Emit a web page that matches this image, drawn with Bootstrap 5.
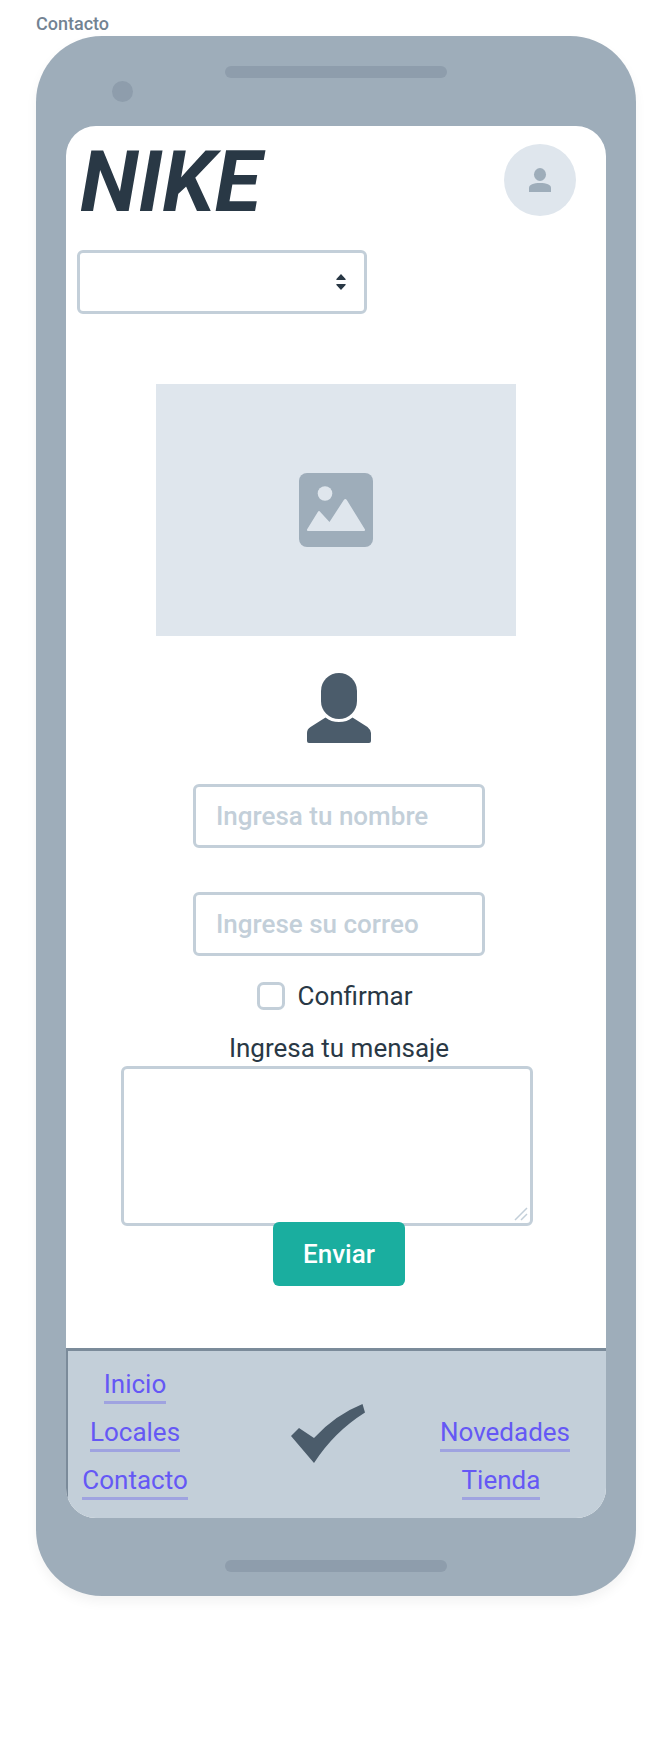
<!DOCTYPE html>
<html lang="es">
<head>
<meta charset="utf-8">
<meta name="viewport" content="width=device-width, initial-scale=1">
<title>Contacto</title>
<link href="https://cdn.jsdelivr.net/npm/bootstrap@5.3.0/dist/css/bootstrap.min.css" rel="stylesheet">
<style>
  :root { --ink: #293845; --line: #c3cfd9; --shell: #9eadba; --groove: #8e9dac; --slate: #4b5c6b; --soft: #dfe6ed; }
  body { font-family: Roboto, "Liberation Sans", sans-serif; font-size: 26px; line-height: 36px; color: var(--ink); background: #fff; }
  .stage { max-width: 672px; padding: 12px 36px 162px; }
  .frame-title { font-size: 18px; line-height: 24px; font-weight: 500; color: #738392; margin: 0; }
  .device { background: var(--shell); border-radius: 66px; padding: 30px 30px 24px; box-shadow: 0 6px 12px rgba(0, 0, 0, .05); }
  .groove { width: 222px; height: 12px; border-radius: 6px; background: var(--groove); }
  .lens { width: 21px; height: 21px; border-radius: 50%; background: var(--groove); margin: 3px 0 24px 46px; }
  .screen { background: #fff; border-radius: 30px; overflow: hidden; margin-bottom: 42px; }
  .topbar { padding: 18px 30px 0 14px; }
  .brand { font-size: 85px; line-height: 68px; padding-top: 4px; font-weight: 700; font-style: italic; margin: 0; }
  .avatar { width: 72px; height: 72px; background: var(--soft); border: 0; padding: 0; }
  .field { height: 64px; border: 3px solid var(--line); border-radius: 6px; padding: 0 20px; font-size: 26px; line-height: 36px; color: var(--ink); }
  .field::placeholder { color: var(--line); font-weight: 500; opacity: 1; }
  .picker { width: 290px; margin: 34px 0 0 11px; background: #fff url("data:image/svg+xml,%3Csvg xmlns='http://www.w3.org/2000/svg' width='10' height='16' fill='%23293845'%3E%3Cpath d='M5 0 9.6 5v1H.4V5zM5 16 9.6 11v-1H.4v1z'/%3E%3C/svg%3E") no-repeat right 18px center; background-size: 10px 16px; }
  .photo { width: 360px; height: 252px; background: var(--soft); margin-top: 70px; }
  .contact-form { padding: 37px 0 62px 6px; }
  .short { width: 292px; }
  .name-field { margin-top: 40px; }
  .mail-field { margin-top: 44px; }
  .confirm-row { margin: 22px 8px 16px 0; gap: 12px; }
  .tick { width: 28px; height: 28px; margin: 0; border: 3px solid var(--line); border-radius: 5px; }
  .message { width: 412px; height: 160px; margin-right: 24px; resize: none; background: #fff url("data:image/svg+xml,%3Csvg xmlns='http://www.w3.org/2000/svg' width='14' height='14' stroke='%23c3cfd9' stroke-width='1.5'%3E%3Cpath d='M1 13 13 1M7 13l6-6'/%3E%3C/svg%3E") no-repeat right 2px bottom 2px; background-size: 14px 14px; }
  .send { width: 132px; height: 64px; margin-top: -4px; padding: 0; border: 0; border-radius: 6px; background: #1aae9f; color: #fff; font-size: 26px; font-weight: 500; }
  .send:hover { background: #17998c; color: #fff; }
  .site-foot { background: var(--line); border-top: 3px solid #7b8b9a; border-left: 2px solid #7b8b9a; padding: 16px 34px 18px 0; }
  .links { width: 134px; gap: 11px; }
  .links a { line-height: 34px; color: #6558f5; text-decoration: none; border-bottom: 3px solid #9fa3e0; }
  svg { display: block; }
</style>
</head>
<body>
<main class="stage mx-auto">
  <p class="frame-title">Contacto</p>
  <div class="device">
    <div class="groove mx-auto"></div>
    <div class="lens"></div>
    <div class="screen">
      <header class="topbar d-flex justify-content-between align-items-center">
        <h1 class="brand">NIKE</h1>
        <button type="button" class="avatar rounded-circle d-flex align-items-center justify-content-center" aria-label="Cuenta">
          <svg width="22" height="24" viewBox="0 0 22 24" fill="#9eadba"><ellipse cx="11" cy="6.5" rx="6" ry="6.5"/><path d="M0 24v-4c0-3.500 4.500-5 11-5s11 1.500 11 5v4z"/></svg>
        </button>
      </header>
      <select class="field picker form-select" aria-label="Menú"><option></option></select>

      <div class="photo mx-auto d-flex align-items-center justify-content-center" role="img" aria-label="Imagen">
        <svg width="74" height="74" viewBox="0 0 74 74"><rect width="74" height="74" rx="8" fill="#9eadba"/><g fill="#dfe6ed"><circle cx="26" cy="20.500" r="7.300"/><path d="M8 56.500 18.800 38.900q1.200-1.700 2.500 0L30.500 49 44.800 27q1.500-2 3 0L66 56.500q.3 1.500-1 1.500H9q-1.300 0-1-1.500z"/></g></svg>
      </div>

      <form class="contact-form d-flex flex-column align-items-center">
        <svg width="64" height="71" viewBox="0 0 64 71" fill="#4b5c6b" aria-hidden="true"><path d="M14 18a18 18 0 0 1 36 0v10a18 18 0 0 1-36 0z"/><path d="M18.500 44.500Q24 49 32 49t13.500-4.500L60.500 54Q64 57 64 60v8q0 2-2 2H2q-2 0-2-2v-8q0-4 3.500-6z"/></svg>
        <input type="text" class="field short name-field form-control" placeholder="Ingresa tu nombre" aria-label="Nombre">
        <input type="email" class="field short mail-field form-control" placeholder="Ingrese su correo" aria-label="Correo">
        <div class="confirm-row d-flex align-items-center">
          <input type="checkbox" class="tick form-check-input" id="confirm">
          <label for="confirm">Confirmar</label>
        </div>
        <label for="message">Ingresa tu mensaje</label>
        <textarea id="message" class="field message form-control"></textarea>
        <button type="submit" class="send btn position-relative">Enviar</button>
      </form>

      <footer class="site-foot d-flex justify-content-between">
        <nav class="links d-flex flex-column align-items-center" aria-label="Secciones">
          <a href="#">Inicio</a><a href="#">Locales</a><a href="#">Contacto</a>
        </nav>
        <svg class="align-self-center ms-3" width="74" height="60" viewBox="0 0 74 60" fill="#4b5c6b" aria-hidden="true"><path d="M0 32 8 24l15 10Q44 11 71.500 0L74 8.500Q43 28 23 59z"/></svg>
        <nav class="links d-flex flex-column align-items-center justify-content-end" aria-label="Compras">
          <a href="#">Novedades</a><a href="#" class="me-2">Tienda</a>
        </nav>
      </footer>
    </div>
    <div class="groove mx-auto"></div>
  </div>
</main>
<script src="https://cdn.jsdelivr.net/npm/bootstrap@5.3.0/dist/js/bootstrap.bundle.min.js"></script>
</body>
</html>
